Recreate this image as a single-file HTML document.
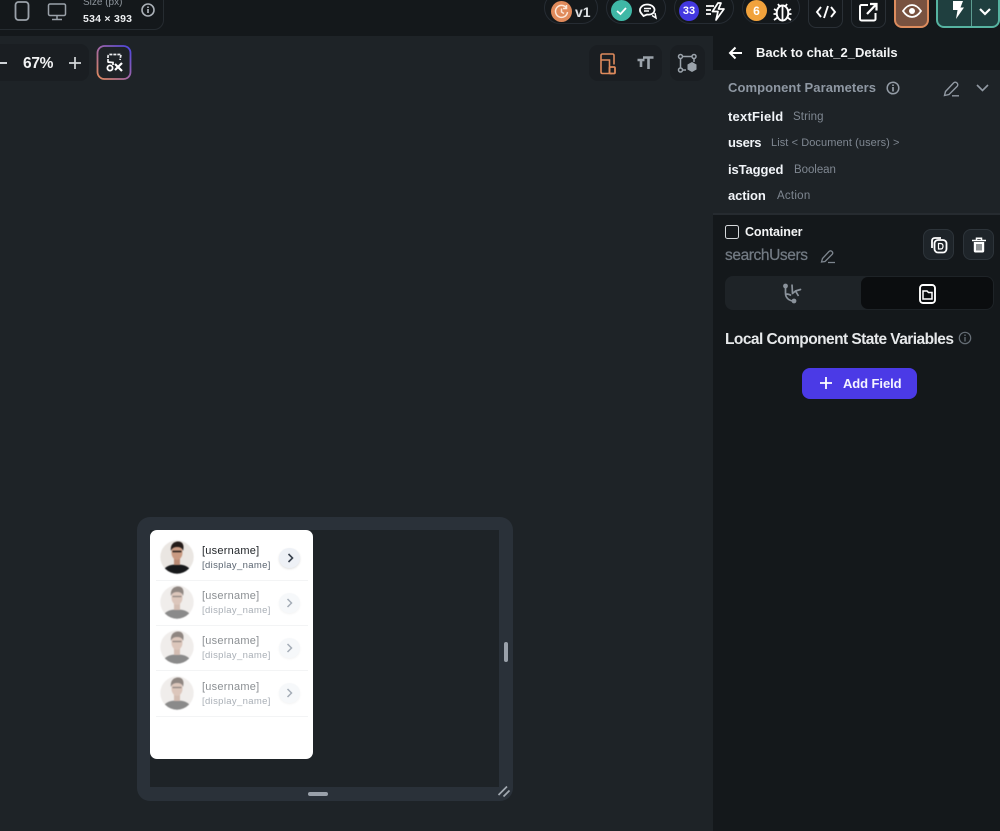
<!DOCTYPE html>
<html>
<head>
<meta charset="utf-8">
<style>
html,body{margin:0;padding:0;background:#1e2327;}
body{width:1000px;height:831px;overflow:hidden;position:relative;font-family:"Liberation Sans",sans-serif;color:#fff;}
.a{position:absolute;}
.t{position:absolute;white-space:nowrap;line-height:1;}
svg{position:absolute;overflow:visible;}
.pill{position:absolute;top:-8px;height:32px;border:1px solid #262c33;border-radius:18px;box-sizing:border-box;}
.btn{position:absolute;top:-8px;height:36px;width:35px;border:1px solid #2a3036;border-radius:8px;box-sizing:border-box;}
.pn{font-weight:bold;font-size:13px;color:#f1f4f8;letter-spacing:-.1px;}
.pt{font-size:11.5px;color:#7f8791;letter-spacing:-.05px;}
.u{font-size:11px;letter-spacing:.24px;}
.d{font-size:9.5px;letter-spacing:.35px;}
</style>
</head>
<body>
<!-- top bar -->
<div class="a" style="left:0;top:0;width:1000px;height:36px;background:#14181b"></div>
<div class="a" style="left:-10px;top:-10px;width:174px;height:40px;border:1px solid #262c31;border-radius:10px;box-sizing:border-box"></div>
<svg style="left:0;top:0" width="170" height="30" fill="none">
<rect x="15.5" y="2" width="13" height="18" rx="3" stroke="#9aa1a9" stroke-width="1.8"/>
<rect x="48.5" y="4" width="17" height="11.500" rx="1.500" stroke="#9aa1a9" stroke-width="1.500"/>
<path d="M57 16V19M52 19.500H62" stroke="#9aa1a9" stroke-width="1.500"/>
<circle cx="148" cy="10" r="6" stroke="#aab0b7" stroke-width="1.600"/>
<path d="M148 9V13M148 6.500V8" stroke="#aab0b7" stroke-width="1.700"/>
</svg>
<div class="t" style="left:83px;top:-2px;font-size:10px;color:#8e959c">Size (px)</div>
<div class="t" style="left:83px;top:14px;font-size:10.5px;font-weight:bold;color:#eef0f2;letter-spacing:.25px">534 × 393</div>

<!-- top right pills -->
<div class="pill" style="left:544px;width:54px"></div>
<div class="a" style="left:551px;top:1px;width:21px;height:21px;border-radius:50%;background:#e08a5b"></div>
<svg style="left:551px;top:1px" width="21" height="21" fill="none"><path d="M15.500 7A6 6 0 1 0 16.500 11M15.500 4V7.500H12M10.500 7.500V11L13 12.500" stroke="#fbe6d8" stroke-width="1.500"/></svg>
<div class="t" style="left:575px;top:5px;font-size:14px;font-weight:bold;color:#dfe2e5">v1</div>

<div class="pill" style="left:606px;width:60px"></div>
<div class="a" style="left:611px;top:0;width:21px;height:21px;border-radius:50%;background:#3fb8a6"></div>
<svg style="left:611px;top:0" width="55" height="24" fill="none">
<path d="M6 11L9.500 14L15 8" stroke="#fff" stroke-width="1.800"/>
<path d="M30 13C27 9 31 4.500 36 4.500C41 4.500 45 8 43 12C42 14 39 15 36 14.500L32.500 16Z" stroke="#fff" stroke-width="1.800"/>
<path d="M33 8.500H40M33 11H38M41 15.500L45 18L44 13" stroke="#fff" stroke-width="1.500"/>
</svg>

<div class="pill" style="left:674px;width:60px"></div>
<div class="a" style="left:679px;top:1px;width:20px;height:20px;border-radius:50%;background:#4338e0"></div>
<div class="t" style="left:679px;top:6px;width:20px;text-align:center;font-size:11px;font-weight:bold;color:#fff">33</div>
<svg style="left:706px;top:2px" width="20" height="20" fill="none">
<path d="M12 1L6.500 9.500H12L10 18L18 7H12.500L15 1Z" stroke="#fff" stroke-width="1.700" stroke-linejoin="round"/>
<path d="M0 4H8M0 8H5M0 12H5" stroke="#fff" stroke-width="1.700"/>
</svg>

<div class="pill" style="left:742px;width:58px"></div>
<div class="a" style="left:746px;top:0;width:21px;height:21px;border-radius:50%;background:#f1a23c"></div>
<div class="t" style="left:746px;top:5px;width:21px;text-align:center;font-size:12px;font-weight:bold;color:#fff">6</div>
<svg style="left:773px;top:1px" width="20" height="22" fill="none">
<ellipse cx="9.500" cy="12" rx="5.800" ry="7.500" stroke="#fff" stroke-width="2"/>
<path d="M9.500 5V19M5 3L7 6M14 3L12 6M1 8L4.500 10M18 8L14.500 10M0.500 13H4M18.500 13H15M1 19L4.500 16.500M18 19L14.500 16.500" stroke="#fff" stroke-width="1.800"/>
</svg>

<div class="btn" style="left:808px"></div>
<svg style="left:816px;top:4px" width="20" height="16" fill="none"><path d="M5 3L1 8L5 13M15 3L19 8L15 13M12 2L8 14" stroke="#fff" stroke-width="1.900"/></svg>
<div class="btn" style="left:851px"></div>
<svg style="left:859px;top:2px" width="20" height="20" fill="none"><path d="M9 3H2.500C1.700 3 1 3.700 1 4.500V17C1 17.800 1.700 18.500 2.500 18.500H15C15.800 18.500 16.500 17.800 16.500 17V11" stroke="#fff" stroke-width="2"/><path d="M8 12L17 2.500M11 2H17.500V8.500" stroke="#fff" stroke-width="2.200"/></svg>
<div class="a" style="left:894px;top:-8px;width:35px;height:36px;background:#795240;border:2px solid #dd8c5e;border-radius:8px;box-sizing:border-box"></div>
<svg style="left:902px;top:3px" width="20" height="16" fill="none"><path d="M1 8C4 3.500 7 2 10 2C13 2 16 3.500 19 8C16 12.500 13 14 10 14C7 14 4 12.500 1 8Z" stroke="#fff" stroke-width="1.800"/><circle cx="10" cy="8" r="3" fill="#fff"/></svg>
<div class="a" style="left:936px;top:-8px;width:64px;height:36px;background:#1f3f3f;border:2px solid #56b3a1;border-radius:8px;box-sizing:border-box"></div>
<div class="a" style="left:971px;top:0;width:1px;height:26px;background:#5d9d91"></div>
<svg style="left:951px;top:1px" width="14" height="18" fill="#fff"><path d="M2 0H12L9.500 6.500H13L5 18L6.500 9H2Z"/></svg>
<svg style="left:979px;top:8px" width="12" height="8" fill="none"><path d="M1 1L6 6L11 1" stroke="#fff" stroke-width="2.200"/></svg>

<!-- toolbars -->
<div class="a" style="left:-10px;top:44px;width:99px;height:37px;background:#1a1e22;border-radius:9px"></div>
<div class="a" style="left:-2px;top:62px;width:9px;height:2px;background:#cfd3d7"></div>
<div class="t" style="left:23px;top:56px;font-size:15.5px;font-weight:bold;color:#f2f3f4;letter-spacing:-.3px">67%</div>
<svg style="left:68px;top:56px" width="14" height="14" fill="none"><path d="M7 1V13M1 7H13" stroke="#d4d7da" stroke-width="1.700"/></svg>
<svg style="left:96px;top:45px" width="36" height="36" fill="none">
<defs><linearGradient id="g" x1="0" y1="1" x2="1" y2="0"><stop offset="0" stop-color="#e08a5b"/><stop offset=".5" stop-color="#a066a8"/><stop offset="1" stop-color="#4b45e0"/></linearGradient></defs>
<rect x="1.500" y="1" width="33" height="33" rx="7" stroke="url(#g)" stroke-width="1.800"/>
<path d="M12 17V11.500C12 10 13 9.500 14 9.500H25L24 15" stroke="#eceef0" stroke-width="1.700" stroke-dasharray="3 1"/>
<path d="M19 19L26 26M26 18L19 25" stroke="#fff" stroke-width="2.200"/>
<circle cx="14" cy="23" r="2.600" stroke="#fff" stroke-width="1.800"/>
<path d="M11.500 17L17 17.500L17 20" stroke="#fff" stroke-width="1.700"/>
</svg>

<div class="a" style="left:589px;top:45px;width:73px;height:36px;background:#1a1e22;border-radius:9px"></div>
<svg style="left:600px;top:53px" width="16" height="22" fill="none">
<path d="M12 20.500H2.500C1.500 20.500 1 20 1 19V2.500C1 1.500 1.500 1 2.500 1H12.500C13.500 1 14 1.500 14 2.500V11.500M1 7H9.500V20.500" stroke="#dd8a5c" stroke-width="1.600"/>
<rect x="9.500" y="14" width="5.500" height="6.500" rx="1" stroke="#dd8a5c" stroke-width="1.800"/>
</svg>
<svg style="left:637px;top:55px" width="17" height="15" fill="none"><path d="M6 2.500H16.500M11.500 2.500V14M0.500 5H7.500M4 5V12" stroke="#9aa2aa" stroke-width="2.600"/></svg>
<div class="a" style="left:670px;top:45px;width:35px;height:36px;background:#1a1e22;border-radius:9px"></div>
<svg style="left:678px;top:54px" width="19" height="19" fill="none">
<g stroke="#9aa2aa" stroke-width="1.500">
<circle cx="2.500" cy="2.500" r="2"/><circle cx="16" cy="2.500" r="2"/><circle cx="2.500" cy="16" r="2"/>
<path d="M4.500 2.500H14M2.500 4.500V14M16 4.500V8M4.500 16H8"/></g>
<path d="M14 8L18.500 10.500V15.500L14 18L9.500 15.500V10.500Z" fill="#9aa2aa"/>
</svg>

<!-- right panel -->
<div class="a" style="left:713px;top:36px;width:287px;height:795px;background:#14181b"></div>
<div class="a" style="left:713px;top:70px;width:287px;height:143px;background:#1e2327"></div>
<div class="a" style="left:713px;top:213px;width:287px;height:2px;background:#262b30"></div>
<svg style="left:728px;top:46px" width="15" height="14" fill="none"><path d="M14 7H2M7.500 1.500L2 7L7.500 12.500" stroke="#fff" stroke-width="2"/></svg>
<div class="t" style="left:756px;top:46px;font-size:13px;font-weight:bold;color:#f4f5f6;letter-spacing:0">Back to chat_2_Details</div>
<div class="t" style="left:728px;top:81px;font-size:13px;font-weight:bold;color:#8f98a3;letter-spacing:.07px">Component Parameters</div>
<svg style="left:886px;top:81px" width="14" height="14" fill="none"><circle cx="7" cy="7" r="5.800" stroke="#949ca6" stroke-width="1.500"/><path d="M7 6V10.500M7 3.500V5" stroke="#949ca6" stroke-width="1.700"/></svg>
<svg style="left:943px;top:81px" width="18" height="16" fill="none"><path d="M1.500 14.500L2.500 10.500L10.500 2C11.500 1 13 1 14 2C15 3 15 4.500 14 5.500L6 13.500ZM9 14.800H16" stroke="#929aa4" stroke-width="1.400"/></svg>
<svg style="left:976px;top:84px" width="13" height="8" fill="none"><path d="M1 1L6.500 6.500L12 1" stroke="#929aa4" stroke-width="1.600"/></svg>

<div class="t pn" style="left:728px;top:110px;letter-spacing:.22px">textField</div><div class="t pt" style="left:793px;top:112px;letter-spacing:.1px">String</div>
<div class="t pn" style="left:728px;top:136px;letter-spacing:-.3px">users</div><div class="t pt" style="left:771px;top:138px;font-size:11px;letter-spacing:.08px">List &lt; Document (users) &gt;</div>
<div class="t pn" style="left:728px;top:163px">isTagged</div><div class="t pt" style="left:794px;top:165px">Boolean</div>
<div class="t pn" style="left:728px;top:189px">action</div><div class="t pt" style="left:777px;top:191px;letter-spacing:.25px">Action</div>

<div class="a" style="left:725px;top:225px;width:14px;height:14px;border:1.500px solid #d5d8db;border-radius:2.500px;box-sizing:border-box"></div>
<div class="t" style="left:745px;top:226px;font-size:12.5px;font-weight:bold;color:#f4f5f6;letter-spacing:-.1px">Container</div>
<div class="t" style="left:725px;top:248px;font-size:15.5px;color:#727a83;letter-spacing:-.4px;-webkit-text-stroke:.25px #727a83">searchUsers</div>
<svg style="left:820px;top:249px" width="16" height="15" fill="none"><path d="M1.500 13L2.500 9.500L9 2.500C10 1.500 11 1.500 12 2.500C13 3.500 13 4.500 12 5.500L5 12.500ZM8 13.500H15" stroke="#7d858e" stroke-width="1.300"/></svg>
<div class="a" style="left:923px;top:229px;width:31px;height:31px;background:#1e2429;border:1px solid #2d343a;border-radius:8px;box-sizing:border-box"></div>
<svg style="left:931px;top:237px" width="17" height="17" fill="none"><rect x="3.500" y="3" width="12" height="12.500" rx="3.500" stroke="#fff" stroke-width="1.800"/><path d="M1 11V4C1 2 2 1 4 1H10" stroke="#fff" stroke-width="1.800"/><path d="M7.500 6.500V12H9.500C11.500 12 12 11 12 9.200C12 7.500 11.500 6.500 9.500 6.500Z" stroke="#fff" stroke-width="1.200"/></svg>
<div class="a" style="left:963px;top:229px;width:31px;height:31px;background:#1e2429;border:1px solid #2d343a;border-radius:8px;box-sizing:border-box"></div>
<svg style="left:972px;top:237px" width="14" height="16" fill="none"><path d="M0 3.500H14M4.500 3V1.200H9.500V3" stroke="#fff" stroke-width="1.500"/><path d="M1.800 5H12.200V14C12.200 15 11.500 15.500 10.800 15.500H3.200C2.500 15.500 1.800 15 1.800 14Z" fill="#fff"/><path d="M5 7V13.500M7 7V13.500M9 7V13.500" stroke="#1e2429" stroke-width="1"/></svg>

<div class="a" style="left:725px;top:276px;width:269px;height:34px;background:#1e2327;border-radius:8px"></div>
<div class="a" style="left:861px;top:277px;width:132px;height:32px;background:#0b0d0f;border-radius:7px"></div>
<svg style="left:782px;top:283px" width="22" height="21" fill="none">
<circle cx="3.500" cy="3" r="2.400" fill="#8a929b"/><circle cx="12" cy="18" r="2.400" fill="#8a929b"/>
<path d="M3.500 4V10C3.500 15 7 17.500 11 18M4 11C6.500 11 8 11.500 9 12.500" stroke="#8a929b" stroke-width="1.700"/>
<path d="M10 1.500L10.500 10.500L13.500 8L16.500 13M13.500 8L18.500 6.500Z" stroke="#8a929b" stroke-width="1.700" stroke-linejoin="round"/>
</svg>
<svg style="left:919px;top:284px" width="17" height="20" fill="none">
<rect x="1" y="1" width="15" height="18" rx="3" stroke="#fff" stroke-width="1.900"/>
<path d="M4 7H8L9.500 8.500H13V15H4Z" stroke="#fff" stroke-width="1.500"/>
</svg>

<div class="t" style="left:725px;top:332px;font-size:15.5px;font-weight:bold;color:#e6e8ea;letter-spacing:-.55px">Local Component State Variables</div>
<svg style="left:958px;top:331px" width="14" height="14" fill="none"><circle cx="7" cy="7" r="5.700" stroke="#666e76" stroke-width="1.200"/><path d="M7 6V10.500M7 3.500V5" stroke="#666e76" stroke-width="1.300"/></svg>
<div class="a" style="left:802px;top:368px;width:115px;height:31px;background:#4b3ae6;border-radius:8px"></div>
<svg style="left:820px;top:377px" width="12" height="12" fill="none"><path d="M6 0V12M0 6H12" stroke="#fff" stroke-width="1.800"/></svg>
<div class="t" style="left:843px;top:377px;font-size:13px;font-weight:bold;color:#f5f4ff;letter-spacing:-.08px">Add Field</div>

<!-- device frame -->
<div class="a" style="left:137px;top:517px;width:376px;height:284px;background:#2a3139;border-radius:13px"></div>
<div class="a" style="left:150px;top:530px;width:349px;height:257px;background:#1e2327"></div>
<div class="a" style="left:504px;top:642px;width:4px;height:20px;background:#9aa1aa;border-radius:2px"></div>
<div class="a" style="left:308px;top:792px;width:20px;height:4px;background:#9aa1aa;border-radius:2px"></div>
<svg style="left:497px;top:785px" width="14" height="13" fill="none"><path d="M1.500 10L10 1.500M6.500 11.500L12.500 5.500" stroke="#a2a9b1" stroke-width="1.700"/></svg>

<!-- phone card -->
<div class="a" style="left:150px;top:530px;width:163px;height:229px;background:#fff;border-radius:7px"></div>
<div class="a" style="left:156px;top:580px;width:152px;height:1px;background:#f3f4f5"></div>
<div class="a" style="left:156px;top:625px;width:152px;height:1px;background:#f3f4f5"></div>
<div class="a" style="left:156px;top:670px;width:152px;height:1px;background:#f3f4f5"></div>
<div class="a" style="left:156px;top:716px;width:152px;height:1px;background:#f3f4f5"></div>

<!-- row 1 -->
<svg style="left:160px;top:540px;filter:blur(.4px)" width="34" height="34">
<defs><clipPath id="c"><circle cx="17" cy="17" r="16.700"/></clipPath></defs>
<circle cx="17" cy="17" r="16.700" fill="#eae6e2"/>
<g clip-path="url(#c)"><path d="M3 34C3 27 9 24.500 17 24.500C25 24.500 31 27 31 34Z" fill="#17181a"/><rect x="14" y="18" width="6" height="7" fill="#b98a74"/><ellipse cx="17" cy="12.500" rx="5.500" ry="7.500" fill="#c99a82"/><path d="M11 11C10 4.500 14 1.500 18 1.500C23 1.500 24.500 5.500 23 11C22 7.500 20 7 17 7C14 7 12 8 11 11Z" fill="#241c19"/><path d="M12.500 11.500H21.500" stroke="#241c19" stroke-width="1.500"/></g>
</svg>
<div class="t u" style="left:202px;top:546px;color:#23272b">[username]</div>
<div class="t d" style="left:202px;top:561px;color:#5a6470">[display_name]</div>
<div class="a" style="left:279px;top:548px;width:21px;height:20px;background:#eef1f6;border-radius:50%;box-shadow:0 1px 2px rgba(0,0,0,.12)"></div>
<svg style="left:287px;top:553px" width="7" height="10" fill="none"><path d="M1.500 1L5.500 5L1.500 9" stroke="#39424e" stroke-width="1.600"/></svg>

<!-- row 2 -->
<svg style="left:160px;top:585px;filter:blur(.4px)" width="34" height="34"><use href="#p"/></svg>
<div class="t u" style="left:202px;top:591px;color:#8b8f93">[username]</div>
<div class="t d" style="left:202px;top:606px;color:#a9afb6">[display_name]</div>
<div class="a" style="left:279px;top:593px;width:21px;height:20px;background:#f6f8fa;border-radius:50%;box-shadow:0 1px 2px rgba(0,0,0,.05)"></div>
<svg style="left:286px;top:598px" width="7" height="10" fill="none"><path d="M1.500 1L5.500 5L1.500 9" stroke="#a5adb7" stroke-width="1.500"/></svg>

<!-- row 3 -->
<svg style="left:160px;top:630px;filter:blur(.4px)" width="34" height="34"><use href="#p"/></svg>
<div class="t u" style="left:202px;top:636px;color:#8b8f93">[username]</div>
<div class="t d" style="left:202px;top:651px;color:#a9afb6">[display_name]</div>
<div class="a" style="left:279px;top:638px;width:21px;height:20px;background:#f6f8fa;border-radius:50%;box-shadow:0 1px 2px rgba(0,0,0,.05)"></div>
<svg style="left:286px;top:643px" width="7" height="10" fill="none"><path d="M1.500 1L5.500 5L1.500 9" stroke="#a5adb7" stroke-width="1.500"/></svg>

<!-- row 4 -->
<svg style="left:160px;top:676px;filter:blur(.4px)" width="34" height="34"><use href="#p"/></svg>
<div class="t u" style="left:202px;top:682px;color:#8b8f93">[username]</div>
<div class="t d" style="left:202px;top:697px;color:#a9afb6">[display_name]</div>
<div class="a" style="left:279px;top:683px;width:21px;height:20px;background:#f6f8fa;border-radius:50%;box-shadow:0 1px 2px rgba(0,0,0,.05)"></div>
<svg style="left:286px;top:688px" width="7" height="10" fill="none"><path d="M1.500 1L5.500 5L1.500 9" stroke="#a5adb7" stroke-width="1.500"/></svg>

<svg width="0" height="0" style="left:0;top:0"><defs>
<g id="p"><circle cx="17" cy="17" r="16.700" fill="#f0edeb"/>
<g clip-path="url(#c)"><path d="M3 34C3 27 9 24.500 17 24.500C25 24.500 31 27 31 34Z" fill="#8a8a8a"/><rect x="14" y="18" width="6" height="7" fill="#d3bdb2"/><ellipse cx="17" cy="12.500" rx="5.500" ry="7.500" fill="#dcc6bb"/><path d="M11 11C10 4.500 14 1.500 18 1.500C23 1.500 24.500 5.500 23 11C22 7.500 20 7 17 7C14 7 12 8 11 11Z" fill="#8f8681"/><path d="M12.500 11.500H21.500" stroke="#8f8681" stroke-width="1.300"/></g></g>
</defs></svg>
</body>
</html>
